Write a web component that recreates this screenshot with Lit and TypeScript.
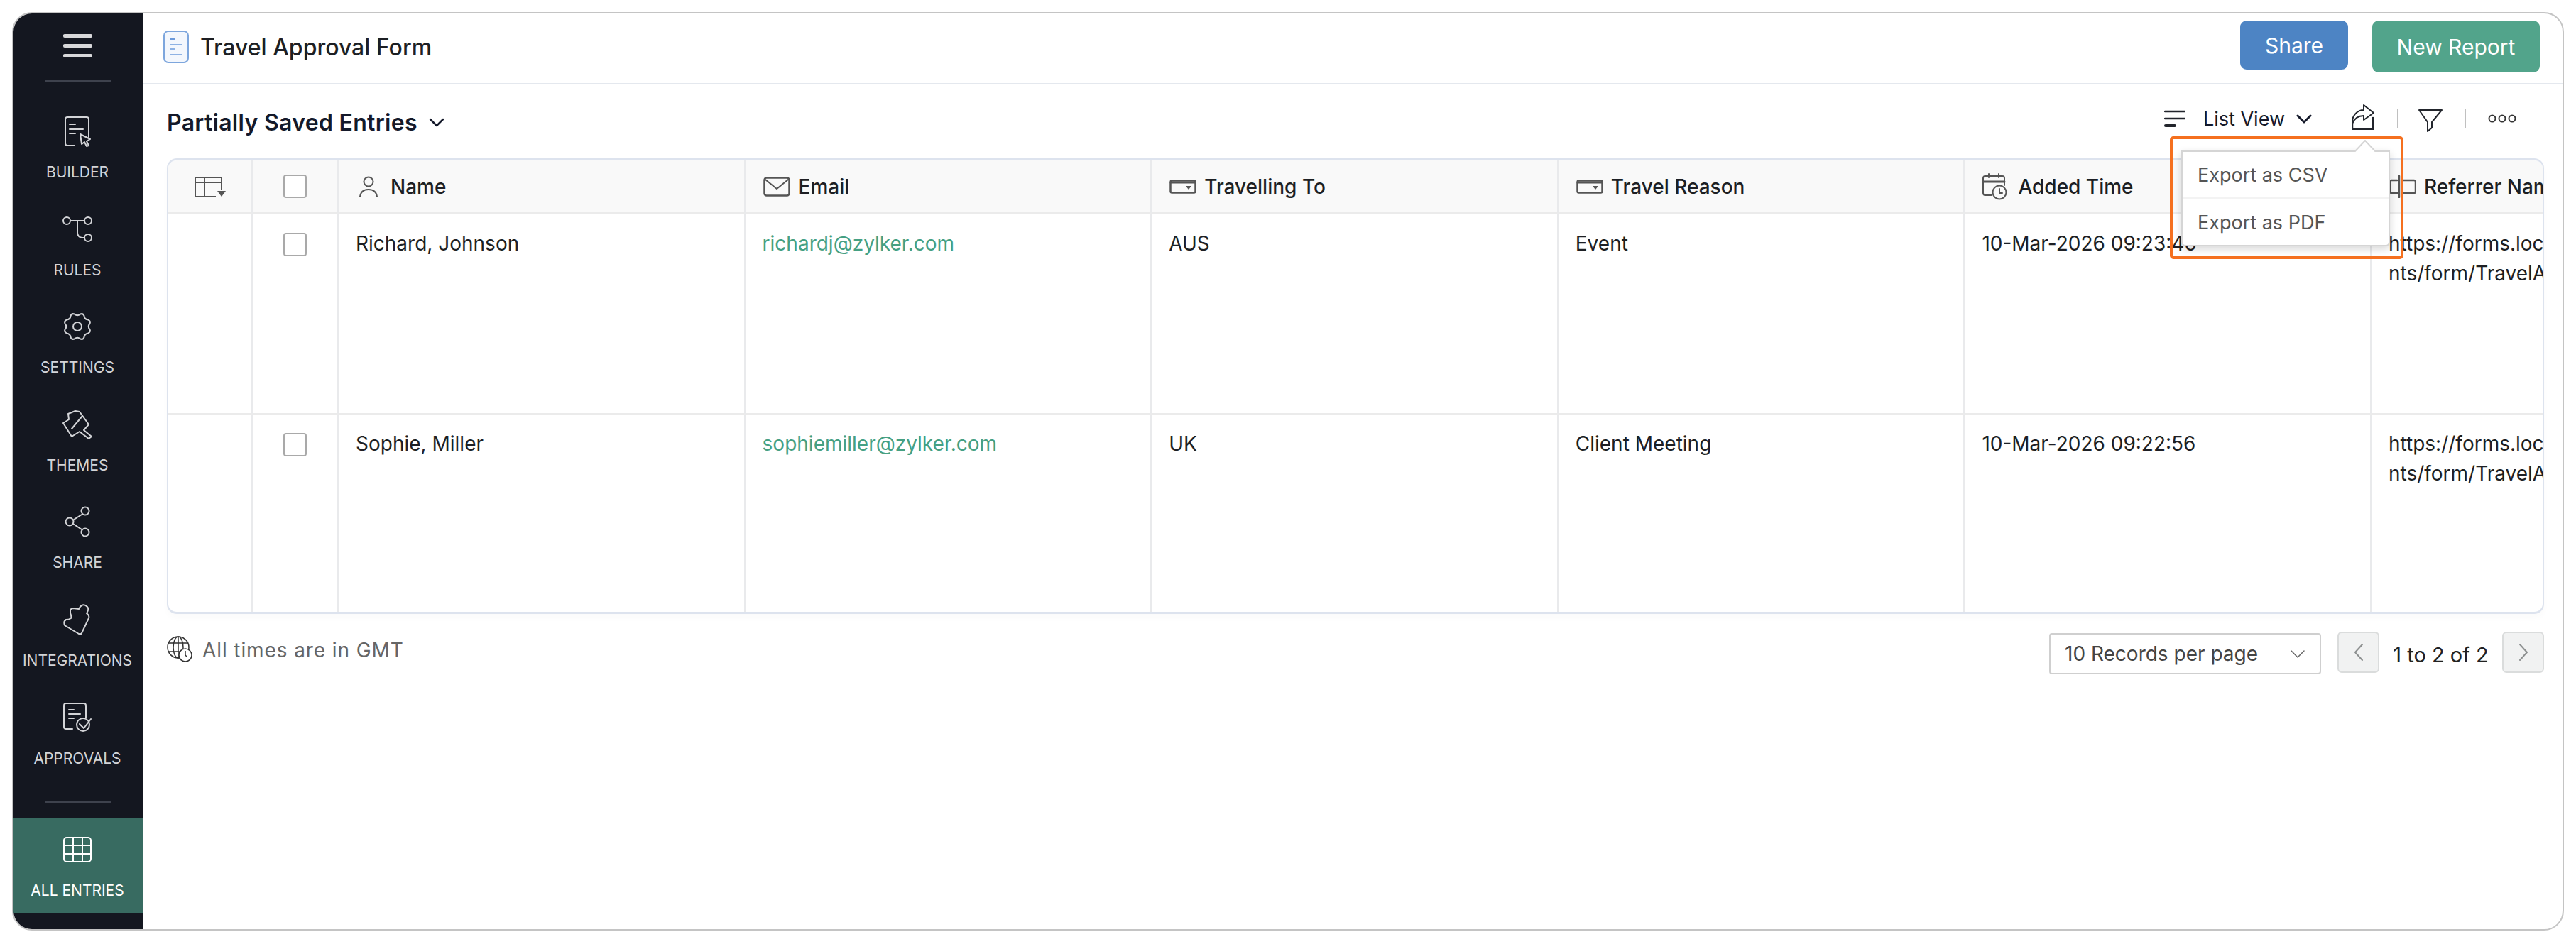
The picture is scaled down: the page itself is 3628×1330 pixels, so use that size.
import { LitElement, html, css, svg } from "lit";
import { customElement } from "lit/decorators.js";

const ico = (w: number, h: number, body: unknown, cls = "") =>
  html`<svg class=${cls} width=${w} height=${h} viewBox="0 0 ${w} ${h}" fill="none" stroke="currentColor" stroke-width="2" stroke-linecap="round" stroke-linejoin="round">${body}</svg>`;

function gearPath(cx: number, cy: number, rOut: number, rIn: number, teeth: number) {
  const pts: string[] = [];
  const step = (Math.PI * 2) / teeth;
  for (let i = 0; i < teeth; i++) {
    const a = i * step + step / 2;
    const p = (ang: number, r: number) => `${(cx + Math.cos(ang) * r).toFixed(1)} ${(cy + Math.sin(ang) * r).toFixed(1)}`;
    pts.push(`${i === 0 ? "M" : "L"}${p(a - step * 0.2, rOut - 1)}`);
    pts.push(`Q${p(a, rOut + 1.5)} ${p(a + step * 0.2, rOut - 1)}`);
    pts.push(`Q${p(a + step * 0.5, rIn - 1)} ${p(a + step * 0.8, rOut - 1)}`);
  }
  return pts.join(" ") + "z";
}

const navIcons: Record<string, unknown> = {
  BUILDER: ico(38, 43, svg`<path d="M15 41H5a3 3 0 0 1-3-3V4a3 3 0 0 1 3-3h27a3 3 0 0 1 3 3v25"/><path d="M8 11h8M8 18h19M8 24h8"/><path d="M23 25l14 7-5 3 3 6-3 1-3-6-4 3z" fill="#141720"/>`),
  RULES: ico(42, 38, svg`<circle cx="6" cy="7" r="5"/><circle cx="36" cy="7" r="5"/><circle cx="36" cy="31" r="5"/><path d="M11 7h20M21 7v17a7 7 0 0 0 7 7h3"/>`),
  SETTINGS: ico(42, 42, svg`<circle cx="21" cy="21" r="6"/><path d="${gearPath(21, 21, 19, 15, 8)}"/>`),
  THEMES: ico(42, 42, svg`<path d="M1 19l8-5-1-8 10-4 6 1 13 18-7 8 11 9-4 3-13-10-11 7z"/><path d="M13 27L28 9"/>`),
  SHARE: ico(36, 44, svg`<circle cx="29" cy="7" r="5.5"/><circle cx="7" cy="22" r="5.5"/><circle cx="29" cy="37" r="5.5"/><path d="M13 19l11-7M12 25l12 8"/>`),
  INTEGRATIONS: ico(40, 44, svg`<path d="M2 30L22 42Q25 43 26 41L36 20Q37 17 35 15L33 13Q37 7 34 4Q30 0 26 2Q24 3 22 7L14 6Q11 6 10 9L10 13Q12 17 11 20Q8 22 4 22Q0 24 2 30z"/>`),
  APPROVALS: ico(41, 42, svg`<path d="M13 37H4a3 3 0 0 1-3-3V4a3 3 0 0 1 3-3h25a3 3 0 0 1 3 3v17"/><path d="M8 10h7M8 16h16M8 22h7"/><circle cx="28" cy="31" r="9" fill="#141720"/><path d="M23 30l6 6 10-13"/>`),
  "ALL ENTRIES": ico(42, 38, svg`<rect x="2" y="2" width="38" height="34" rx="4"/><path d="M2 13h38M2 25h38M15 2v34M28 2v34"/>`),
};

const nav = ["BUILDER", "RULES", "SETTINGS", "THEMES", "SHARE", "INTEGRATIONS", "APPROVALS"];

const userIco = ico(28, 30, svg`<circle cx="14" cy="8" r="6.5"/><path d="M2 29c1-7 6-10 12-10s11 3 12 10"/>`, "i-user");
const mailIco = ico(38, 28, svg`<rect x="1.5" y="1.5" width="35" height="25" rx="3" stroke-width="2.5"/><path d="M3 4l16 13L35 4"/>`, "i-mail");
const dropIco = () => ico(38, 20, svg`<rect x="1.5" y="1.5" width="35" height="17" rx="2" stroke-width="2.5"/><path d="M2 4h34" stroke-width="3"/><path d="M23 9h8l-4 5z" fill="currentColor" stroke="none"/>`, "i-drop");
const refIco = ico(38, 32, svg`<path d="M11 7H3a2 2 0 0 0-2 2v14a2 2 0 0 0 2 2h8M19 7h16a2 2 0 0 1 2 2v14a2 2 0 0 1-2 2H19M14 1v30" stroke-width="2.5"/>`, "i-drop");
const calIco = ico(36, 38, svg`<path d="M13 31H4a3 3 0 0 1-3-3V7a3 3 0 0 1 3-3h24a3 3 0 0 1 3 3v10"/><path d="M1 12h30" stroke-width="3"/><path d="M9 1v5M23 1v5"/><circle cx="24" cy="27" r="9.5"/><path d="M24 22v6h4"/>`, "i-cal");

@customElement("app-root")
export class AppRoot extends LitElement {
  static styles = css`
    :host { display: block; padding: 17px 17px 0; font-family: Inter, "Noto Sans", sans-serif; color: #1d1f24; background: #fff; }
    * { box-sizing: border-box; }
    .frame { width: 3594px; height: 1294px; border: 2px solid #c4c4c4; border-radius: 28px; display: flex; overflow: hidden; }
    .side { width: 183px; flex: none; background: #141720; display: flex; flex-direction: column; align-items: center; color: #d3d4d7; padding-right: 3px; }
    .burger { margin-top: 29px; width: 41px; height: 33px; display: flex; flex-direction: column; justify-content: space-between; }
    .burger i { display: block; height: 5px; border-radius: 2px; background: #d8d8da; }
    .rule { width: 93px; height: 2px; background: #3e424d; flex: none; }
    .rule.top { margin-top: 32px; }
    .items { margin-top: 40px; display: flex; flex-direction: column; align-items: stretch; align-self: stretch; }
    .item { height: 137.6px; display: flex; flex-direction: column; align-items: center; font-size: 21px; line-height: 26px; }
    .item .ic { height: 60px; flex: none; display: flex; align-items: center; justify-content: center; }
    .item .lb { margin-top: 15px; }
    .rule.bot { margin-top: 11px; }
    .active { align-self: stretch; height: 134px; margin: 21px -3px 0 0; background: #386b61; color: #fff; display: flex; flex-direction: column; align-items: center; font-size: 21px; line-height: 26px; padding: 26px 3px 0 0; }
    .active .lb { margin-top: 26px; }
    .main { flex: 1; min-width: 0; display: flex; flex-direction: column; position: relative; }
    .head { height: 100px; flex: none; border-bottom: 2px solid #e4e8ee; display: flex; align-items: center; padding: 0 32px 4px 28px; }
    .title { font-size: 32px; font-weight: 500; margin-left: 16px; flex: 1; }
    .btn { color: #fff; font-size: 30px; display: flex; align-items: center; justify-content: center; border-radius: 9px; align-self: flex-start; margin-top: 10px; }
    .btn.share { width: 152px; height: 69px; background: #4d84c4; margin-right: 34px; }
    .btn.new { width: 236px; height: 73px; background: #52a48b; }
    .content { padding: 0 26px 0 33px; flex: 1; }
    .bar { height: 104px; display: flex; align-items: center; padding-top: 2px; }
    .bar h2 { margin: 0; font-size: 32px; font-weight: 600; color: #14192a; letter-spacing: .3px; }
    .bar .chev { margin-left: 16px; color: #14192a; }
    .spacer { flex: 1; }
    .tools { display: flex; align-items: center; color: #22252c; margin: -10px 39px 0 0; }
    .tools .lv { font-size: 27px; color: #14192a; margin-left: 25px; }
    .shr { margin-left: 56px; margin-top: -4px; }
    .flt { margin-left: 28px; margin-top: 6px; }
    .dots { margin-left: 31px; color: #333; }
    .sep { width: 2px; height: 27px; background: #c0c0c0; }
    .sep.a { margin-left: 32px; margin-top: -2px; }
    .sep.b { margin-left: 31px; margin-top: -2px; }
    .table { height: 642px; border: 2px solid #dde3ee; border-width: 3px 2px; border-radius: 14px; overflow: hidden; display: grid; grid-template-columns: 119px 121px repeat(6, 572.6px); grid-template-rows: 76px 282px 282px; box-shadow: 0 6px 10px rgba(0,0,0,.02); }
    .c { border-right: 2px solid #e9eaec; border-bottom: 2px solid #ebebeb; font-size: 28px; line-height: 42px; padding: 20px 24px; color: #1d1f24; white-space: pre; overflow: hidden; }
    .hc { background: #f9f9f9; padding: 0 25px; display: flex; align-items: center; font-weight: 500; border-bottom-width: 3px; color: #1d1f24; }
    .hc svg { color: #555; flex: none; }
    .i-user { margin: 0 17px 0 3px; }
    .i-mail { margin-right: 12px; }
    .i-drop { margin-right: 11px; }
    .i-cal { margin-right: 14px; }
    .c.center { padding: 26px 0 0; display: flex; justify-content: center; align-items: flex-start; }
    .hc.center { padding: 0; justify-content: center; align-items: center; }
    .last { border-bottom: none; }
    .cb { width: 33px; height: 33px; border: 2px solid #a9a9a9; border-radius: 4px; background: #fff; display: block; }
    .c.link { color: #45a083; }
    .foot { display: flex; align-items: flex-start; margin-top: 25px; }
    .tz { display: flex; align-items: center; color: #666; font-size: 28px; letter-spacing: .9px; gap: 14px; margin-top: 9px; }
    .tz svg { margin-top: -4px; }
    .sel { width: 383px; height: 58px; border: 2px solid #cfcfcf; border-radius: 4px; display: flex; align-items: center; justify-content: space-between; padding: 0 20px; font-size: 28px; color: #444; margin-top: 2px; }
    .pg { width: 59px; height: 58px; border: 2px solid #dadcdc; background: #f1f2f2; border-radius: 6px; display: flex; align-items: center; justify-content: center; color: #8d9090; }
    .pg.first { margin-left: 23px; }
    .cnt { font-size: 29px; width: 173px; text-align: center; color: #222; margin-top: 4px; line-height: 58px; }
    .outline { position: absolute; left: 2854px; top: 173px; width: 329px; height: 173px; border: 4px solid #f5701f; border-radius: 5px; }
    .pop { position: absolute; left: 2870px; top: 193px; width: 294px; height: 135px; background: #fff; border: 2px solid #d5d5d5; border-radius: 0 0 6px 6px; box-shadow: 0 4px 12px rgba(0,0,0,.16); color: #555; font-size: 27px; }
    .pop .row { height: 64px; display: flex; align-items: center; padding-left: 21px; }
    .pop .row + .row { border-top: 3px solid #f3f3f3; height: 67px; }
    .arrow { position: absolute; left: 241px; top: -17px; display: block; }
  `;

  private row(name: string, email: string, to: string, reason: string, time: string, last = false) {
    const l = last ? "last" : "";
    return html`
      <div class="c center ${l}"></div>
      <div class="c center ${l}"><span class="cb"></span></div>
      <div class="c ${l}">${name}</div>
      <div class="c link ${l}">${email}</div>
      <div class="c ${l}">${to}</div>
      <div class="c ${l}">${reason}</div>
      <div class="c ${l}">${time}</div>
      <div class="c ${l}">https://forms.localhost/docume
nts/form/TravelApprovalForm</div>`;
  }

  render() {
    return html`
      <div class="frame">
        <aside class="side">
          <div class="burger"><i></i><i></i><i></i></div>
          <div class="rule top"></div>
          <div class="items">
            ${nav.map((n) => html`<div class="item"><div class="ic">${navIcons[n]}</div><div class="lb">${n}</div></div>`)}
          </div>
          <div class="rule bot"></div>
          <div class="active">${navIcons["ALL ENTRIES"]}<div class="lb">ALL ENTRIES</div></div>
        </aside>
        <section class="main">
          <header class="head">
            <svg width="36" height="46" viewBox="0 0 36 46" fill="#f3f7fd" stroke="#7da6dd" stroke-width="2"><rect x="1" y="1" width="34" height="44" rx="6"/><path d="M9 12h7" stroke-width="3" stroke="#6c9adb"/><path d="M9 20h18M9 26h7M9 34h18" stroke="#8eb2e4"/></svg>
            <div class="title">Travel Approval Form</div>
            <div class="btn share">Share</div>
            <div class="btn new">New Report</div>
          </header>
          <div class="content">
            <div class="bar">
              <h2>Partially Saved Entries</h2>
              ${ico(22, 13, svg`<path d="M2 2l9 9 9-9" stroke-width="2.5"/>`, "chev")}
              <div class="spacer"></div>
              <div class="tools">
                ${ico(30, 26, svg`<path d="M1 3h28M1 13h28" stroke-width="2.5"/><path d="M2 23h13" stroke-width="4"/>`)}
                <span class="lv">List View</span>
                ${ico(22, 13, svg`<path d="M2 2l9 9 9-9" stroke-width="3"/>`, "chev")}
                ${ico(32, 36, svg`<path d="M1 27C0 16 8 8 17 8V1L31 12 17 22V16C10 16 4 20 1 27z"/><path d="M1 27v8h29V19" stroke-width="2.5"/>`, "shr")}
                <div class="sep a"></div>
                ${ico(34, 32, svg`<path d="M1 1h32L19 18v8l-6 5V18z"/>`, "flt")}
                <div class="sep b"></div>
                ${ico(40, 12, svg`<circle cx="6" cy="6" r="4.5"/><circle cx="20" cy="6" r="4.5"/><circle cx="34" cy="6" r="4.5"/>`, "dots")}
              </div>
            </div>
            <div class="table">
              <div class="c hc center">${ico(46, 30, svg`<path d="M39 20V2H2v27h29M2 9h37M15 2v27" stroke-linecap="butt"/><path d="M33 21h12l-6 8z" fill="currentColor" stroke="none"/>`)}</div>
              <div class="c hc center"><span class="cb"></span></div>
              <div class="c hc">${userIco}Name</div>
              <div class="c hc">${mailIco}Email</div>
              <div class="c hc">${dropIco()}Travelling To</div>
              <div class="c hc">${dropIco()}Travel Reason</div>
              <div class="c hc">${calIco}Added Time</div>
              <div class="c hc">${refIco}Referrer Name</div>
              ${this.row("Richard, Johnson", "richardj@zylker.com", "AUS", "Event", "10-Mar-2026 09:23:46")}
              ${this.row("Sophie, Miller", "sophiemiller@zylker.com", "UK", "Client Meeting", "10-Mar-2026 09:22:56", true)}
            </div>
            <div class="foot">
              <div class="tz">
                <svg width="36" height="37" viewBox="0 0 36 37" fill="none" stroke="#333" stroke-width="1.5"><circle cx="16" cy="16" r="15"/><ellipse cx="16" cy="16" rx="7" ry="15"/><path d="M16 1v30M2 10h28M2 22h28"/><circle cx="26" cy="27" r="9" fill="#fff"/><path d="M26 21v6l3 3"/></svg>
                All times are in GMT
              </div>
              <div class="spacer"></div>
              <div class="sel">10 Records per page ${ico(22, 13, svg`<path d="M2 2l9 9 9-9" stroke="#666" stroke-width="1.5"/>`)}</div>
              <div class="pg first">${ico(14, 26, svg`<path d="M12 2L2 13l10 11"/>`)}</div>
              <div class="cnt">1 to 2 of 2</div>
              <div class="pg">${ico(14, 26, svg`<path d="M2 2l10 11L2 24"/>`)}</div>
            </div>
          </div>
          <div class="outline"></div>
          <div class="pop">
            <svg class="arrow" width="32" height="17" viewBox="0 0 32 17" fill="#fff" stroke="#d5d5d5" stroke-width="2"><path d="M1 17L16 1l15 16"/></svg>
            <div class="row">Export as CSV</div>
            <div class="row">Export as PDF</div>
          </div>
        </section>
      </div>`;
  }
}
